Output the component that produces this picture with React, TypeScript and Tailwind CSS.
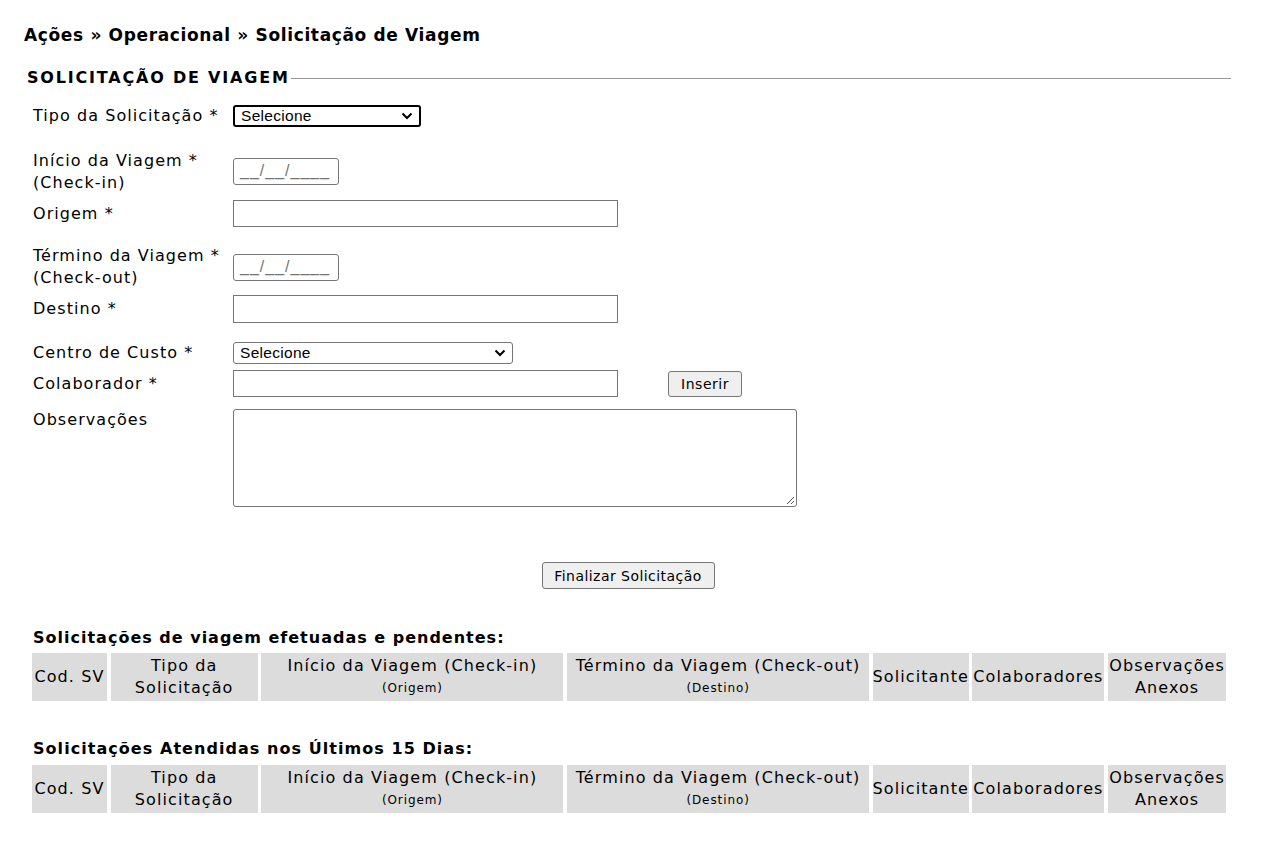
const verdana = "font-['DejaVu_Sans',Verdana,sans-serif]"

function Chevron() {
  return (
    <svg width="12" height="8" viewBox="0 0 12 8" className="shrink-0">
      <path d="M1.5 1.5 L6 6 L10.5 1.5" fill="none" stroke="#000" strokeWidth="2" />
    </svg>
  )
}

function FakeSelect({ width, focused }: { width: string; focused?: boolean }) {
  return (
    <div
      className={`${width} h-[22px] flex items-center justify-between pl-[6px] pr-[6px] bg-white rounded-[3px] font-['Liberation_Sans',Arial,sans-serif] text-[15.5px] text-black ${
        focused ? 'border-2 border-black' : 'border border-[#767676]'
      }`}
    >
      <span className="tracking-[0.3px]">Selecione</span>
      <Chevron />
    </div>
  )
}

function TextBox({ w = 'w-[385px]', h = 'h-[27px]' }: { w?: string; h?: string }) {
  return <div className={`${w} ${h} border border-[#767676] bg-white`} />
}

function DateBox() {
  return (
    <div className="w-[106px] h-[27px] border border-[#767676] rounded-[3px] bg-white flex items-end pl-[6px] pb-[5px] font-['Liberation_Sans',Arial,sans-serif] text-[16px] tracking-[1px] text-[#757575] leading-none">
      __/__/____
    </div>
  )
}

function Label({ children }: { children: React.ReactNode }) {
  return <div className="w-[200px] shrink-0 text-[16px] leading-[22px] tracking-[1.05px] text-black">{children}</div>
}

const cols = [
  { top: 'Cod. SV' },
  { top: 'Tipo da', bottom: 'Solicitação' },
  { top: 'Início da Viagem (Check-in)', small: '(Origem)' },
  { top: 'Término da Viagem (Check-out)', small: '(Destino)' },
  { top: 'Solicitante' },
  { top: 'Colaboradores' },
  { top: 'Observações', bottom: 'Anexos' },
]

function HeaderTable() {
  return (
    <div className="grid grid-cols-[75px_147px_302px_302px_96px_132px_118px] gap-x-[3.7px] ml-[32px] h-[48px]">
      {cols.map((c) => (
        <div
          key={c.top}
          className="bg-[#dcdcdc] flex flex-col items-center justify-center text-center text-[16px] leading-[22px] tracking-[1.1px] whitespace-nowrap"
        >
          <div>{c.top}</div>
          {c.bottom && <div>{c.bottom}</div>}
          {c.small && <div className="text-[12px] leading-[22px] tracking-[0.9px]">{c.small}</div>}
        </div>
      ))}
    </div>
  )
}

export default function App() {
  return (
    <div className={`${verdana} text-black bg-white w-[1274px] min-h-[842px]`}>
      <div className="pt-[24px] pl-[24px] text-[17px] font-bold leading-[22px] tracking-[0.65px]">
        Ações » Operacional » Solicitação de Viagem
      </div>

      <div className="flex items-center mt-[21px] pl-[27px] pr-[43px]">
        <span className="text-[16px] font-bold leading-[22px] tracking-[1.8px]">SOLICITAÇÃO DE VIAGEM</span>
        <div className="flex-1 h-px bg-[#999] ml-[1px] mt-px" />
      </div>

      <div className="pl-[33px] mt-[16px]">
        <div className="flex items-center h-[22px]">
          <Label>Tipo da Solicitação *</Label>
          <FakeSelect width="w-[188px]" focused />
        </div>

        <div className="flex items-start mt-[23px]">
          <Label>
            Início da Viagem *
            <br />
            (Check-in)
          </Label>
          <div className="mt-[8px]">
            <DateBox />
          </div>
        </div>

        <div className="flex items-center mt-[6px]">
          <Label>Origem *</Label>
          <TextBox />
        </div>

        <div className="flex items-start mt-[18px]">
          <Label>
            Término da Viagem *
            <br />
            (Check-out)
          </Label>
          <div className="mt-[9px]">
            <DateBox />
          </div>
        </div>

        <div className="flex items-center mt-[6px]">
          <Label>Destino *</Label>
          <TextBox h="h-[28px]" />
        </div>

        <div className="flex items-center mt-[19px]">
          <Label>Centro de Custo *</Label>
          <FakeSelect width="w-[280px]" />
        </div>

        <div className="flex items-center mt-[6px]">
          <Label>Colaborador *</Label>
          <TextBox />
          <button className="ml-[50px] w-[74px] h-[26px] bg-[#efefef] border border-[#767676] rounded-[3px] text-[14px] tracking-[0.5px] leading-none">
            Inserir
          </button>
        </div>

        <div className="flex items-start mt-[12px]">
          <Label>Observações</Label>
          <div className="relative w-[564px] h-[98px] border border-[#767676] rounded-[3px] bg-white">
            <svg width="10" height="10" viewBox="0 0 10 10" className="absolute right-[1px] bottom-[1px]">
              <path d="M9 2 L2 9 M9 6 L6 9" stroke="#555" strokeWidth="1" />
            </svg>
          </div>
        </div>
      </div>

      <div className="flex justify-center mt-[55px]">
        <button className="ml-[-18px] w-[173px] h-[27px] bg-[#efefef] border border-[#767676] rounded-[3px] text-[14px] tracking-[0.45px] leading-none">
          Finalizar Solicitação
        </button>
      </div>

      <div className="mt-[38px] pl-[33px] text-[16px] font-bold leading-[22px] tracking-[1px]">
        Solicitações de viagem efetuadas e pendentes:
      </div>
      <div className="mt-[4px]">
        <HeaderTable />
      </div>

      <div className="mt-[37px] pl-[33px] text-[16px] font-bold leading-[22px] tracking-[1.05px]">
        Solicitações Atendidas nos Últimos 15 Dias:
      </div>
      <div className="mt-[5px]">
        <HeaderTable />
      </div>
    </div>
  )
}
